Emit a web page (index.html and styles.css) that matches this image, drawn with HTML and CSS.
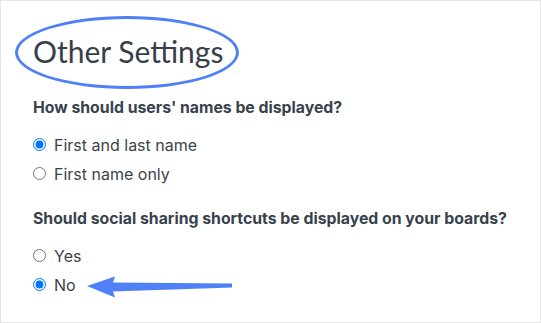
FILE: index.html
```html
<!DOCTYPE html>
<html lang="en">
<head>
  <meta charset="UTF-8">
  <meta name="viewport" content="width=device-width, initial-scale=1.0">
  <link rel="stylesheet" href="styles.css">
  <title>Other Settings</title>
</head>
<body>
  <div class="card">
    <h1 class="title">Other Settings</h1>
    <span class="circle-mark"></span>
    <form class="settings">
      <fieldset class="group">
        <legend class="question">How should users' names be displayed?</legend>
        <label class="option"><input type="radio" name="nameFormat" checked> First and last name</label>
        <label class="option"><input type="radio" name="nameFormat"> First name only</label>
      </fieldset>
      <fieldset class="group">
        <legend class="question">Should social sharing shortcuts be displayed on your boards?</legend>
        <label class="option"><input type="radio" name="sharing"> Yes</label>
        <label class="option"><input type="radio" name="sharing" checked> No</label>
      </fieldset>
    </form>
    <svg class="arrow-mark" width="150" height="26" viewBox="0 0 150 26">
      <polygon points="0,10 28,0.5 26,6.5 145,7.5 145,11.5 26,15.5 28,21.5" fill="#4f80f6"/>
    </svg>
  </div>
</body>
</html>
```

FILE: styles.css
```css
body {
  margin: 0;
  font-family: 'Inter', 'Lato', sans-serif;
  color: #3a434c;
  background: #fff;
}
.card {
  position: relative;
  height: 323px;
  box-sizing: border-box;
  border: 1px solid #e6e6e6;
  padding: 32px 32px 0;
}
.title {
  margin: 0;
  font-family: 'Lato', sans-serif;
  font-size: 30px;
  line-height: 36px;
  font-weight: 400;
  color: #36404b;
}
.circle-mark {
  position: absolute;
  left: 14px;
  top: 15px;
  width: 224px;
  height: 73px;
  box-sizing: border-box;
  border: 3px solid #4f80f6;
  border-radius: 50%;
}
.settings {
  margin-top: 29px;
}
.group {
  border: none;
  margin: 0 0 21px;
  padding: 0;
}
.question {
  padding: 0;
  margin-bottom: 12px;
  font-size: 15.8px;
  line-height: 20px;
  font-weight: 700;
  color: #38424d;
}
.option {
  display: flex;
  align-items: center;
  gap: 8px;
  height: 29px;
  font-size: 16px;
  color: #3b434b;
}
.option input {
  margin: 0;
  width: 13px;
  height: 13px;
}
.arrow-mark {
  position: absolute;
  left: 86px;
  top: 275px;
}
```
